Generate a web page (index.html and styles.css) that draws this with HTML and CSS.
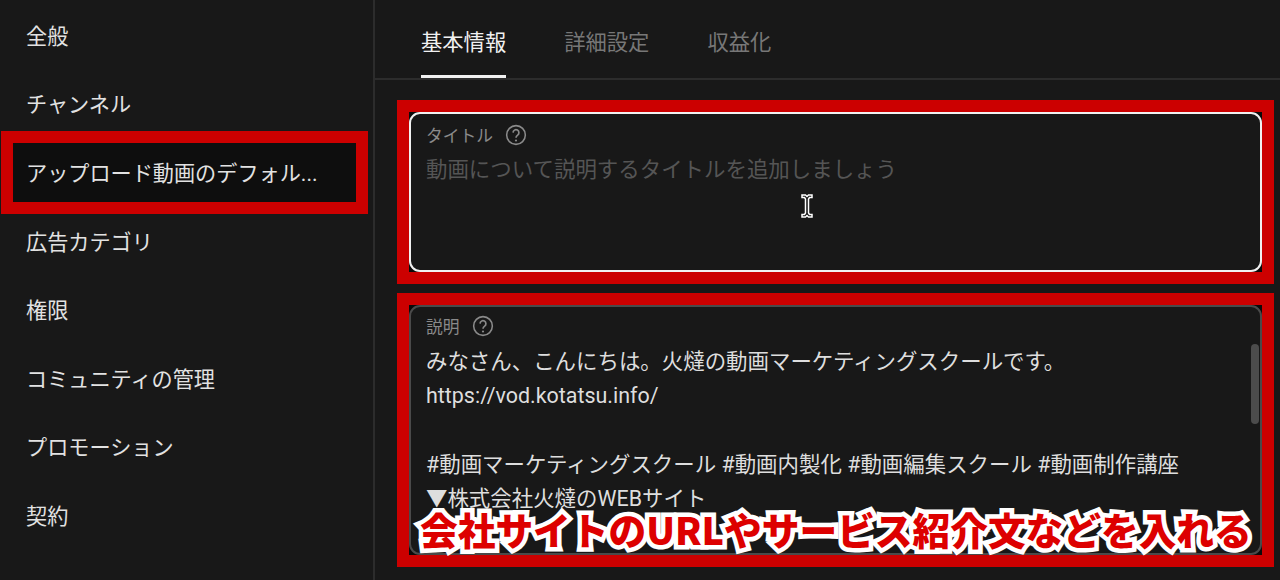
FILE: index.html
```html
<!DOCTYPE html>
<html lang="ja">
<head>
  <meta charset="UTF-8" />
  <title>チャンネルのカスタマイズ</title>
  <link rel="stylesheet" href="styles.css">
</head>
<body>
  <div class="app">
    <nav class="sidebar">
      <a class="nav-item">全般</a>
      <a class="nav-item">チャンネル</a>
      <a class="nav-item nav-item-marked">アップロード動画のデフォル...</a>
      <a class="nav-item">広告カテゴリ</a>
      <a class="nav-item">権限</a>
      <a class="nav-item">コミュニティの管理</a>
      <a class="nav-item">プロモーション</a>
      <a class="nav-item">契約</a>
    </nav>

    <main class="content">
      <div class="tabs">
        <a class="tab tab-active">基本情報</a>
        <a class="tab">詳細設定</a>
        <a class="tab">収益化</a>
      </div>

      <div class="form">
        <div class="marker marker-title">
          <div class="field field-focus">
            <div class="field-label">
              <span>タイトル</span>
              <svg class="help" viewBox="0 0 24 24" aria-hidden="true"><circle cx="12" cy="12" r="10.2" fill="none" stroke="currentColor" stroke-width="1.7"/><path d="M8.8 9.4a3.2 3.2 0 1 1 5 2.7c-1.2.8-1.8 1.4-1.8 2.9" fill="none" stroke="currentColor" stroke-width="1.8"/><circle cx="12" cy="18" r="1.2" fill="currentColor"/></svg>
            </div>
            <p class="placeholder">動画について説明するタイトルを追加しましょう</p>
            <svg class="ibeam" viewBox="0 0 16 28" aria-hidden="true"><path d="M3 3h3.500L8 4.500 9.500 3H13v2.500h-2.500L9.500 7v14l1 1.500H13V25H9.500L8 23.500 6.500 25H3v-2.500h2.500l1-1.500V7l-1-1.500H3z" fill="#111" stroke="#fff" stroke-width="1.500"/></svg>
          </div>
        </div>

        <div class="marker marker-desc">
          <div class="field field-desc">
            <div class="field-label">
              <span>説明</span>
              <svg class="help" viewBox="0 0 24 24" aria-hidden="true"><circle cx="12" cy="12" r="10.2" fill="none" stroke="currentColor" stroke-width="1.7"/><path d="M8.8 9.4a3.2 3.2 0 1 1 5 2.7c-1.2.8-1.8 1.4-1.8 2.9" fill="none" stroke="currentColor" stroke-width="1.8"/><circle cx="12" cy="18" r="1.2" fill="currentColor"/></svg>
            </div>
            <div class="desc-text">
              <p>みなさん、こんにちは。火燵の動画マーケティングスクールです。</p>
              <p>https://vod.kotatsu.info/</p>
              <p>&nbsp;</p>
              <p>#動画マーケティングスクール #動画内製化 #動画編集スクール #動画制作講座</p>
              <p>▼株式会社火燵のWEBサイト</p>
            </div>
            <div class="scroll-thumb"></div>
          </div>
          <div class="caption">会社サイトのURLやサービス紹介文などを入れる</div>
        </div>
      </div>
    </main>
  </div>
</body>
</html>
```

FILE: styles.css
```css
:root {
  --bg: #181818;
  --red: #cc0000;
  --line: #2c2c2c;
  --text: #e6e6e6;
}
*, *::after {
  box-sizing: border-box;
}
body {
  margin: 0;
  background-color: var(--bg);
  color: var(--text);
  font-family: Roboto, "Noto Sans CJK JP", sans-serif;
  height: 580px;
  overflow: hidden;
}
p {
  margin: 0;
}
.app {
  display: flex;
  height: 580px;
}

/* left menu */
.sidebar {
  width: 375px;
  flex-shrink: 0;
  border-right: 2px solid var(--line);
}
.nav-item {
  display: flex;
  align-items: center;
  height: 68.6px;
  padding-left: 26px;
  font-size: 21.15px;
  color: #e2e2e2;
}
.nav-item-marked {
  position: relative;
  z-index: 0;
}
.nav-item-marked::after {
  content: "";
  position: absolute;
  left: 1px;
  top: -6px;
  width: 367px;
  height: 83px;
  border: 12px solid var(--red);
  z-index: -1;
  background-color: #0e0e0e;
}

/* tabs */
.content {
  flex: 1;
  min-width: 0;
}
.tabs {
  display: flex;
  gap: 58px;
  height: 80px;
  padding-left: 46px;
  border-bottom: 2px solid var(--line);
}
.tab {
  height: 78px;
  padding-top: 26px;
  font-size: 21.3px;
  line-height: 34px;
  color: #777;
}
.tab-active {
  color: #f1f1f1;
  border-bottom: 3px solid #f1f1f1;
}

/* form */
.form {
  display: flex;
  flex-direction: column;
  gap: 9px;
  padding: 20px 6px 0 22px;
}
.marker {
  position: relative;
  border: 12px solid var(--red);
  background-color: #0a0a0a;
}
.marker-title {
  height: 184px;
}
.marker-desc {
  height: 274px;
}
.field {
  position: relative;
  height: 100%;
  padding: 8px 15px 0;
  overflow: hidden;
  background-color: var(--bg);
  border-radius: 11px;
  border: 2px solid #4a4a4a;
}
.field-focus {
  border-color: #f1f1f1;
}
.field-desc {
  padding-top: 6px;
}
.field-label {
  display: flex;
  align-items: center;
  gap: 12px;
  height: 26px;
  font-size: 16.8px;
  color: #8a8a8a;
}
.help {
  width: 22px;
  height: 22px;
}
.placeholder {
  margin-top: 5px;
  font-size: 21.45px;
  line-height: 34px;
  color: #555;
}
.desc-text {
  margin-top: 6px;
  font-size: 21.45px;
  line-height: 34.3px;
  color: #dedede;
  white-space: nowrap;
}
.ibeam {
  position: absolute;
  left: 388px;
  top: 78px;
  width: 16px;
  height: 28px;
}
.scroll-thumb {
  position: absolute;
  right: 1px;
  top: 37px;
  width: 8px;
  height: 80px;
  border-radius: 4px;
  background-color: #4c4c4c;
}

/* red annotation over the description box */
.caption {
  position: absolute;
  left: 11px;
  bottom: 1px;
  font-size: 37.7px;
  line-height: 50px;
  font-weight: 900;
  font-family: "Noto Sans CJK JP", sans-serif;
  color: #dd0000;
  white-space: nowrap;
  -webkit-text-stroke: 9px #fff;
  paint-order: stroke fill;
}
```
